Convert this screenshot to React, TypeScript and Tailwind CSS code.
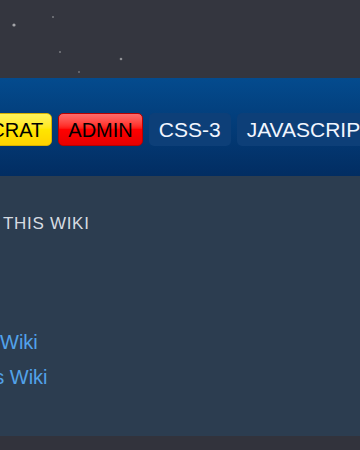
import React from 'react';

const stars = [
  { x: 14, y: 25, r: 1.6, o: 0.55 },
  { x: 53, y: 17, r: 1, o: 0.35 },
  { x: 60, y: 52, r: 1, o: 0.35 },
  { x: 121, y: 59, r: 1.3, o: 0.45 },
  { x: 79, y: 72, r: 1, o: 0.3 },
];

const tags = [
  { label: 'BUREAUCRAT', cls: 'px-[8px] text-[20px] bg-gradient-to-b from-[#fff45a] via-[#ffe600] to-[#ffd200] border border-[#d9b200] text-black' },
  { label: 'ADMIN', cls: 'px-[9px] text-[20px] bg-gradient-to-b from-[#ff6a6a] via-[#ff0000] to-[#e60000] border border-[#b80000] text-black' },
  { label: 'CSS-3', cls: 'px-[10px] text-[21px] bg-[#0d3f78] text-[#f1f6ff]' },
  { label: 'JAVASCRIPT', cls: 'px-[10px] text-[21px] bg-[#0d3f78] text-[#f1f6ff]' },
];

export default function App() {
  return (
    <div className="w-[360px] h-[450px] overflow-hidden bg-[#34363f] font-['Liberation_Sans',Arial,sans-serif]">
      {/* starry header */}
      <svg width="360" height="78" className="block">
        {stars.map((s, i) => (
          <circle key={i} cx={s.x} cy={s.y} r={s.r} fill="#ffffff" opacity={s.o} />
        ))}
      </svg>

      {/* user group tags band */}
      <div className="h-[98px] bg-gradient-to-b from-[#044b8e] to-[#022d62] overflow-hidden pt-[35px]">
        <div className="flex gap-[6px] ml-[-102px] w-max">
          {tags.map((t) => (
            <div
              key={t.label}
              className={`h-[33px] rounded-[5px] flex items-center leading-none shrink-0 ${t.cls}`}
            >
              {t.label}
            </div>
          ))}
        </div>
      </div>

      {/* content */}
      <div className="h-[260px] bg-[#2c3d50] pt-[38px] overflow-hidden">
        <div className="text-[17px] leading-[20px] tracking-[0.7px] text-[#d6dbe1] pl-[3px]">THIS WIKI</div>
        <div className="mt-[91px] text-[20px] leading-[35px] text-[#52a2ea]">
          <div>Wiki</div>
          <div className="ml-[-48px]">Users Wiki</div>
        </div>
      </div>

      <div className="h-[14px] bg-[#32333c]" />
    </div>
  );
}
